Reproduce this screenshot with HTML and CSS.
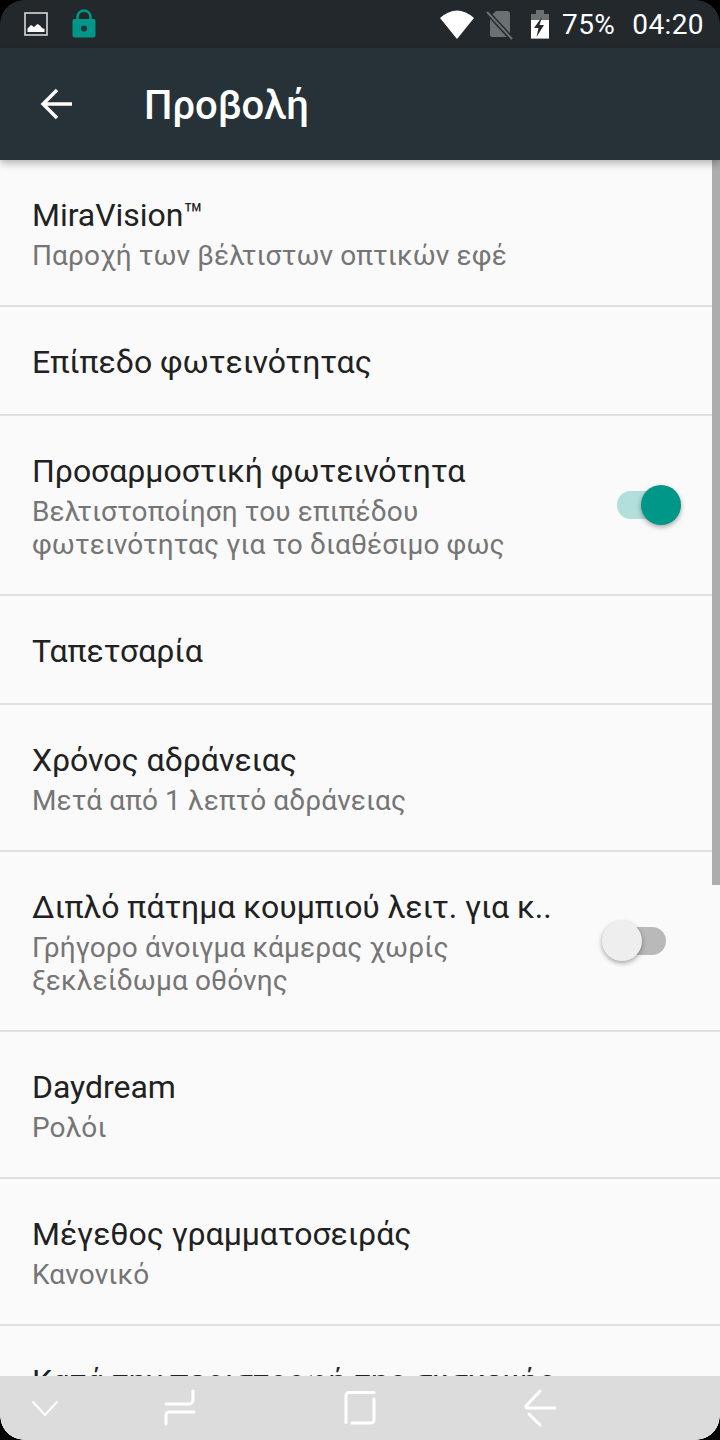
FILE: index.html
```html
<!DOCTYPE html>
<html lang="el">

<head>
    <meta charset="UTF-8">
    <meta name="viewport" content="width=device-width, initial-scale=1.0">
    <link rel="stylesheet" href="styles.css">
    <title>Προβολή</title>
</head>

<body>
    <div class="screen">
        <div class="statusbar">
            <div class="status-left">
                <svg class="ic-image" width="24" height="24" viewBox="0 0 24 24">
                    <rect x="1" y="1" width="22" height="22" fill="none" stroke="#d8d8d8" stroke-width="1.6"/>
                    <path d="M3.500 20v-3.500l3.500-3.500 3 2 3.500-3 2.500 1.500 2 2.500 2.500 1v3z" fill="#fff"/>
                </svg>
                <svg class="ic-lock" width="24" height="30" viewBox="0 0 24 30">
                    <path d="M5.500 11V8a6.500 6.500 0 0 1 13 0v3" fill="none" stroke="#009688" stroke-width="2.600"/>
                    <path d="M2 10h20a1.500 1.500 0 0 1 1.500 1.500v15a2 2 0 0 1-2 2h-19a2 2 0 0 1-2-2v-15A1.500 1.500 0 0 1 2 10z" fill="#009688"/>
                    <circle cx="12" cy="19.500" r="3" fill="#263238"/>
                </svg>
            </div>
            <div class="status-right">
                <svg class="ic-wifi" width="34" height="29" viewBox="0 0 34 29">
                    <path d="M17 29L0 8Q17-7 34 8z" fill="#fff"/>
                </svg>
                <svg class="ic-sim" width="28" height="30" viewBox="0 0 28 30">
                    <path d="M10 1h11a3 3 0 0 1 3 3v21a2 2 0 0 1-2 2H6a2 2 0 0 1-2-2V7z" fill="#6b7173"/>
                    <path d="M1 2l25 27" stroke="#23292d" stroke-width="5"/>
                    <path d="M1 2l25 27" stroke="#6b7173" stroke-width="2"/>
                </svg>
                <svg class="ic-battery" width="18" height="29" viewBox="0 0 18 29">
                    <path d="M5 0h8v4h5v24.500H0V4h5z" fill="#6b7173"/>
                    <path d="M0 10h18v18.500H0z" fill="#fff"/>
                    <path d="M11 7L3 18h4.500L5.500 27l7.500-12H8.500z" fill="#23292d"/>
                </svg>
                <span class="status-pct">75%</span>
                <span class="status-time">04:20</span>
            </div>
        </div>

        <div class="toolbar">
            <svg class="ic-back" width="34" height="32" viewBox="0 0 34 32">
                <path d="M32 16H3M17 2L3 16l14 14" fill="none" stroke="#fff" stroke-width="3.400"/>
            </svg>
            <h1 class="title">Προβολή</h1>
        </div>

        <div class="list">
            <div class="row row-two">
                <div class="row-text">
                    <div class="row-title">MiraVision™</div>
                    <div class="row-sub">Παροχή των βέλτιστων οπτικών εφέ</div>
                </div>
            </div>
            <div class="row row-one">
                <div class="row-text">
                    <div class="row-title">Επίπεδο φωτεινότητας</div>
                </div>
            </div>
            <div class="row row-three">
                <div class="row-text">
                    <div class="row-title">Προσαρμοστική φωτεινότητα</div>
                    <div class="row-sub">Βελτιστοποίηση του επιπέδου<br>φωτεινότητας για το διαθέσιμο φως</div>
                </div>
                <div class="switch switch-on"><span class="knob"></span></div>
            </div>
            <div class="row row-one">
                <div class="row-text">
                    <div class="row-title">Ταπετσαρία</div>
                </div>
            </div>
            <div class="row row-two">
                <div class="row-text">
                    <div class="row-title">Χρόνος αδράνειας</div>
                    <div class="row-sub">Μετά από 1 λεπτό αδράνειας</div>
                </div>
            </div>
            <div class="row row-three">
                <div class="row-text">
                    <div class="row-title">Διπλό πάτημα κουμπιού λειτ. για κ..</div>
                    <div class="row-sub">Γρήγορο άνοιγμα κάμερας χωρίς<br>ξεκλείδωμα οθόνης</div>
                </div>
                <div class="switch switch-off"><span class="knob"></span></div>
            </div>
            <div class="row row-two">
                <div class="row-text">
                    <div class="row-title">Daydream</div>
                    <div class="row-sub">Ρολόι</div>
                </div>
            </div>
            <div class="row row-two">
                <div class="row-text">
                    <div class="row-title">Μέγεθος γραμματοσειράς</div>
                    <div class="row-sub">Κανονικό</div>
                </div>
            </div>
            <div class="row row-two">
                <div class="row-text">
                    <div class="row-title">Κατά την περιστροφή της συσκευής</div>
                </div>
            </div>
        </div>

        <div class="scrollbar"></div>

        <div class="navbar">
            <svg class="nav-ic" width="720" height="64" viewBox="0 0 720 64">
                <g fill="none" stroke="#fff" stroke-width="3" stroke-linecap="round" stroke-linejoin="round">
                    <path d="M33 26l12 13 12-13" stroke-width="2"/>
                    <path d="M193 15v9a4 4 0 0 1-4 4h-23"/>
                    <path d="M194 36h-25a3 3 0 0 0-3 3v9"/>
                    <path d="M374 16.500h-25a3 3 0 0 0-3 3v27"/>
                    <path d="M374 23v21a3 3 0 0 1-3 3h-19"/>
                    <path d="M540 15l-14 15a1.500 1.500 0 0 0 1 2h28"/>
                    <path d="M529 38l11 11"/>
                </g>
            </svg>
        </div>

        <div class="corner corner-tl"></div>
        <div class="corner corner-tr"></div>
        <div class="corner corner-bl"></div>
        <div class="corner corner-br"></div>
    </div>
</body>

</html>
```

FILE: styles.css
```css
* {
    box-sizing: border-box;
}

body {
    margin: 0;
    padding: 0;
    background-color: #000;
    font-family: Roboto, "Noto Sans", sans-serif;
}

.screen {
    position: relative;
    width: 720px;
    height: 1440px;
    overflow: hidden;
    background-color: #fafafa;
}

.statusbar {
    height: 48px;
    background-color: #22282c;
    display: flex;
    justify-content: space-between;
    align-items: center;
    color: #fff;
    padding: 0 16px 0 24px;
}

.status-left {
    display: flex;
    align-items: center;
    gap: 24px;
}

.status-right {
    display: flex;
    align-items: center;
    font-size: 28px;
    letter-spacing: 0.4px;
}

.ic-wifi {
    margin-right: 12px;
    margin-top: 1px;
}

.ic-sim {
    margin-right: 17px;
    margin-top: 2px;
}

.ic-battery {
    margin-right: 13px;
}

.status-time {
    margin-left: 17px;
}

.toolbar {
    position: relative;
    height: 112px;
    background-color: #263238;
    display: flex;
    align-items: center;
    padding-left: 40px;
    box-shadow: 0 3px 8px rgba(0, 0, 0, 0.3);
    z-index: 1;
}

.title {
    margin: 2px 0 0 70px;
    font-size: 40px;
    font-weight: 500;
    color: #fff;
}

.row {
    border-bottom: 2px solid #e0e0e0;
    padding: 0 32px;
    display: flex;
    justify-content: space-between;
}

.row-one {
    height: 109px;
    padding-top: 2px;
    align-items: center;
}

.row-two {
    height: 147px;
    padding-top: 33px;
}

.row-three {
    height: 180px;
    padding-top: 33px;
}

.row-title {
    font-size: 32px;
    line-height: 44px;
    letter-spacing: -0.04px;
    color: #212121;
    white-space: nowrap;
}

.row-sub {
    font-size: 28px;
    line-height: 33px;
    letter-spacing: 0.12px;
    color: #757575;
    margin-top: 2px;
}

.switch {
    position: relative;
    width: 52px;
    height: 28px;
    border-radius: 14px;
    margin-top: 42px;
}

.switch-on {
    background-color: #b2dfdb;
    margin-right: 19px;
}

.switch-off {
    background-color: #b9b9b9;
    margin-right: 22px;
}

.knob {
    position: absolute;
    top: -6px;
    width: 40px;
    height: 40px;
    border-radius: 50%;
    box-shadow: 0 2px 5px rgba(0, 0, 0, 0.35);
}

.switch-on .knob {
    right: -12px;
    background-color: #009688;
}

.switch-off .knob {
    left: -12px;
    background-color: #eeeeee;
}

.scrollbar {
    position: absolute;
    top: 160px;
    right: 0;
    width: 8px;
    height: 725px;
    background-color: #adadad;
}

.navbar {
    position: absolute;
    left: 0;
    bottom: 0;
    width: 720px;
    height: 64px;
    background-color: #dcdcdc;
}

.nav-ic {
    display: block;
}

.corner {
    position: absolute;
    width: 24px;
    height: 24px;
}

.corner-tl {
    top: 0;
    left: 0;
    background: radial-gradient(circle at 100% 100%, transparent 23.500px, #000 24px);
}

.corner-tr {
    top: 0;
    right: 0;
    background: radial-gradient(circle at 0 100%, transparent 23.500px, #000 24px);
}

.corner-bl {
    bottom: 0;
    left: 0;
    background: radial-gradient(circle at 100% 0, transparent 23.500px, #000 24px);
}

.corner-br {
    bottom: 0;
    right: 0;
    background: radial-gradient(circle at 0 0, transparent 23.500px, #000 24px);
}
```
